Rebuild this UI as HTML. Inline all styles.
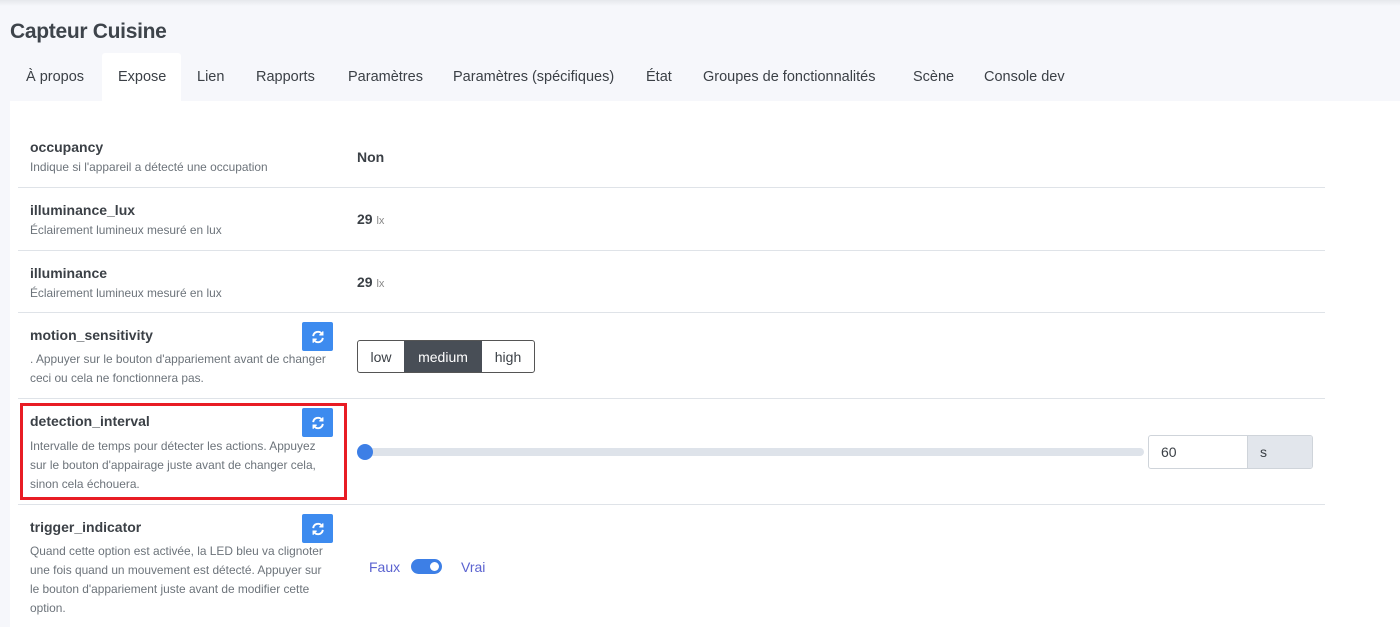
<!DOCTYPE html>
<html><head><meta charset="utf-8"><style>
*{box-sizing:border-box;margin:0;padding:0}
body{width:1400px;height:627px;overflow:hidden;background:#f6f7fb;font-family:"Liberation Sans",sans-serif;color:#3b4046;position:relative}
.top{position:absolute;left:0;top:0;width:1400px;height:6px;background:linear-gradient(#e6e8ec,#f6f7fb)}
h1{position:absolute;left:10px;top:20px;font-size:21px;font-weight:bold;color:#3e444b;letter-spacing:-0.3px}
.tab{position:absolute;top:69px;font-size:14.5px;color:#3b4046}
.act{position:absolute;left:102px;top:53px;width:79px;height:50px;background:#fff;border-radius:3px 3px 0 0}
.card{position:absolute;left:10px;top:101px;width:1390px;height:526px;background:#fff}
.hr{position:absolute;left:18px;width:1307px;height:1px;background:#dfe3e8}
.n{position:absolute;left:30px;font-size:14px;font-weight:bold;color:#3b4046}
.d{position:absolute;left:30px;font-size:11.9px;color:#6c737a;line-height:19px}
.v{position:absolute;left:357px;font-size:14px;font-weight:bold;color:#3b4046}
.v small{font-size:11px;font-weight:normal;color:#888}
.btn{position:absolute;left:302px;width:31px;height:29px;background:#3d8bef;border-radius:2px;display:flex;align-items:center;justify-content:center}
</style></head><body>
<div class="top"></div>
<h1>Capteur Cuisine</h1>
<div class="act"></div>
<div class="card"></div>
<span class="tab" style="left:26px">À propos</span>
<span class="tab" style="left:118px">Expose</span>
<span class="tab" style="left:197px">Lien</span>
<span class="tab" style="left:256px">Rapports</span>
<span class="tab" style="left:348px">Paramètres</span>
<span class="tab" style="left:453px">Paramètres (spécifiques)</span>
<span class="tab" style="left:646px">État</span>
<span class="tab" style="left:703px">Groupes de fonctionnalités</span>
<span class="tab" style="left:913px">Scène</span>
<span class="tab" style="left:984px">Console dev</span>

<div class="n" style="top:139px">occupancy</div>
<div class="d" style="top:158px">Indique si l'appareil a détecté une occupation</div>
<div class="v" style="top:149px">Non</div>
<div class="hr" style="top:187px"></div>

<div class="n" style="top:202px">illuminance_lux</div>
<div class="d" style="top:221px">Éclairement lumineux mesuré en lux</div>
<div class="v" style="top:211px">29 <small>lx</small></div>
<div class="hr" style="top:250px"></div>

<div class="n" style="top:265px">illuminance</div>
<div class="d" style="top:284px">Éclairement lumineux mesuré en lux</div>
<div class="v" style="top:274px">29 <small>lx</small></div>
<div class="hr" style="top:312px"></div>

<div class="n" style="top:327px">motion_sensitivity</div>
<div class="btn" style="top:322px"><svg width="14" height="14" viewBox="0 0 16 16" fill="none" stroke="#fff" stroke-width="2.2"><path d="M2.5 7A5.5 5.5 0 0 1 12.5 4.5"/><path d="M13.5 9A5.5 5.5 0 0 1 3.5 11.5"/><path d="M13.5 1.5v4h-4" fill="#fff" stroke-width="1.5"/><path d="M2.5 14.5v-4h4" fill="#fff" stroke-width="1.5"/></svg></div>
<div class="d" style="top:350px;width:298px">. Appuyer sur le bouton d'appariement avant de changer ceci ou cela ne fonctionnera pas.</div>
<div style="position:absolute;left:357px;top:340px;height:33px;border:1px solid #555;border-radius:3px;display:flex;font-size:14px;overflow:hidden">
<div style="width:46px;display:flex;align-items:center;justify-content:center">low</div>
<div style="width:78px;background:#484e56;color:#fff;display:flex;align-items:center;justify-content:center">medium</div>
<div style="width:52px;display:flex;align-items:center;justify-content:center">high</div></div>
<div class="hr" style="top:398px"></div>

<div style="position:absolute;left:20px;top:403px;width:327px;height:97px;border:3px solid #e81c24"></div>
<div class="n" style="top:413px">detection_interval</div>
<div class="btn" style="top:408px"><svg width="14" height="14" viewBox="0 0 16 16" fill="none" stroke="#fff" stroke-width="2.2"><path d="M2.5 7A5.5 5.5 0 0 1 12.5 4.5"/><path d="M13.5 9A5.5 5.5 0 0 1 3.5 11.5"/><path d="M13.5 1.5v4h-4" fill="#fff" stroke-width="1.5"/><path d="M2.5 14.5v-4h4" fill="#fff" stroke-width="1.5"/></svg></div>
<div class="d" style="top:437px;width:292px">Intervalle de temps pour détecter les actions. Appuyez sur le bouton d'appairage juste avant de changer cela, sinon cela échouera.</div>
<div style="position:absolute;left:360px;top:448px;width:784px;height:8px;background:#dee3ea;border-radius:4px"></div>
<div style="position:absolute;left:357px;top:444px;width:16px;height:16px;background:#3d7fe6;border-radius:50%"></div>
<div style="position:absolute;left:1148px;top:435px;width:165px;height:34px;border:1px solid #cfd4da;border-radius:3px;display:flex;font-size:14px;overflow:hidden">
<div style="width:99px;padding-left:12px;display:flex;align-items:center;border-right:1px solid #cfd4da">60</div>
<div style="flex:1;background:#e2e6ec;padding-left:12px;display:flex;align-items:center">s</div></div>
<div class="hr" style="top:504px"></div>

<div class="n" style="top:519px">trigger_indicator</div>
<div class="btn" style="top:514px"><svg width="14" height="14" viewBox="0 0 16 16" fill="none" stroke="#fff" stroke-width="2.2"><path d="M2.5 7A5.5 5.5 0 0 1 12.5 4.5"/><path d="M13.5 9A5.5 5.5 0 0 1 3.5 11.5"/><path d="M13.5 1.5v4h-4" fill="#fff" stroke-width="1.5"/><path d="M2.5 14.5v-4h4" fill="#fff" stroke-width="1.5"/></svg></div>
<div class="d" style="top:542px;width:296px">Quand cette option est activée, la LED bleu va clignoter une fois quand un mouvement est détecté. Appuyer sur le bouton d'appariement juste avant de modifier cette option.</div>
<div style="position:absolute;left:369px;top:559px;font-size:14px;color:#5b63d0">Faux</div>
<div style="position:absolute;left:411px;top:559px;width:31px;height:15px;background:#3d7fe6;border-radius:8px"><div style="position:absolute;right:3px;top:3px;width:9px;height:9px;background:#fff;border-radius:50%"></div></div>
<div style="position:absolute;left:461px;top:559px;font-size:14px;color:#5b63d0">Vrai</div>
</body></html>
